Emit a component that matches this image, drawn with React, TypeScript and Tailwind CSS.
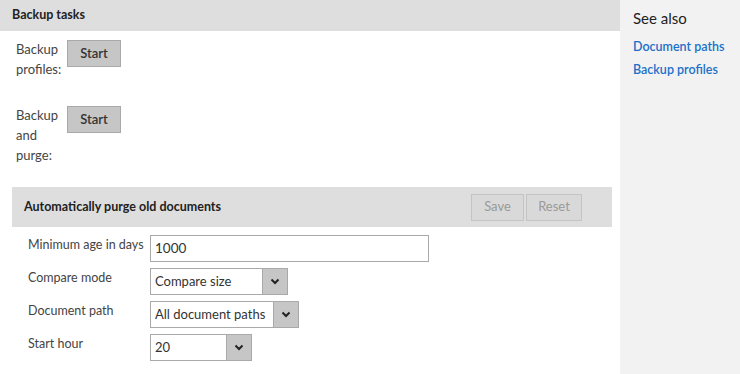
import React from "react";

const font = { fontFamily: "Lato, 'Noto Sans', sans-serif" };

// Small grey action button
const StartButton = () => (
  <button className="w-[54px] h-[27px] bg-[#c6c6c6] border border-[#a9a9a9] text-[13px] font-semibold text-[#333]">
    Start
  </button>
);

interface SelectProps {
  value: string;
  width: string;
}

const Select = ({ value, width }: SelectProps) => (
  <div className={`flex h-[27px] border border-[#a9a9a9] bg-white ${width}`}>
    <div className="flex-1 flex items-center pl-[4px] text-[13px] text-[#333] whitespace-nowrap">{value}</div>
    <div className="w-[25px] bg-[#c6c6c6] border-l border-[#a9a9a9] flex items-center justify-center">
      <svg width="10" height="7" viewBox="0 0 10 7">
        <path d="M1.5 1.5 L5 5 L8.5 1.5" fill="none" stroke="#222" strokeWidth="2" />
      </svg>
    </div>
  </div>
);

const FormRow = ({ label, children }: { label: string; children: React.ReactNode }) => (
  <div className="flex items-start">
    <div className="w-[122px] pt-[1px] text-[12.5px] text-[#444] whitespace-nowrap">{label}</div>
    {children}
  </div>
);

const App = () => {
  return (
    <div className="flex w-[740px] h-[374px] bg-white overflow-hidden" style={font}>
      {/* Main column */}
      <div className="w-[620px]">
        <div className="h-[31px] bg-[#dedede] flex items-center pl-3 text-[12.5px] font-bold text-[#222]">
          Backup tasks
        </div>

        <div className="pl-4 pt-[8px]">
          <div className="flex items-start gap-[6px]">
            <div className="w-[45px] text-[13px] leading-[20px] text-[#444]">Backup profiles:</div>
            <div className="pt-[1px]"><StartButton /></div>
          </div>
          <div className="flex items-start gap-[6px] mt-[26px]">
            <div className="w-[45px] text-[13px] leading-[20px] text-[#444]">Backup and purge:</div>
            <div className="pt-[1px]"><StartButton /></div>
          </div>
        </div>

        <div className="ml-3 mr-2 mt-[22px] h-[40px] bg-[#dedede] flex items-center justify-between pl-3 pr-[30px]">
          <span className="text-[12.5px] font-bold text-[#222]">Automatically purge old documents</span>
          <div className="flex gap-[2px]">
            <button className="w-[53px] h-[27px] bg-[#d9d9d9] border border-[#c4c4c4] text-[13px] text-[#999]">Save</button>
            <button className="w-[56px] h-[27px] bg-[#d9d9d9] border border-[#c4c4c4] text-[13px] text-[#999]">Reset</button>
          </div>
        </div>

        <div className="pl-[28px] pt-[8px] flex flex-col gap-[6px]">
          <FormRow label="Minimum age in days">
            <div className="w-[279px] h-[27px] border border-[#a9a9a9] flex items-center pl-[4px] text-[13.5px] text-[#333]">1000</div>
          </FormRow>
          <FormRow label="Compare mode">
            <Select value="Compare size" width="w-[138px]" />
          </FormRow>
          <FormRow label="Document path">
            <Select value="All document paths" width="w-[149px]" />
          </FormRow>
          <FormRow label="Start hour">
            <Select value="20" width="w-[102px]" />
          </FormRow>
        </div>
      </div>

      {/* See also sidebar */}
      <div className="flex-1 bg-[#f2f2f2] pl-[13px] pt-[7px]">
        <div className="text-[15px] text-[#222]">See also</div>
        <div className="mt-[8px] flex flex-col gap-[5px] text-[12.5px] font-semibold text-[#1c70c8]">
          <a href="#">Document paths</a>
          <a href="#">Backup profiles</a>
        </div>
      </div>
    </div>
  );
};

export default App;
